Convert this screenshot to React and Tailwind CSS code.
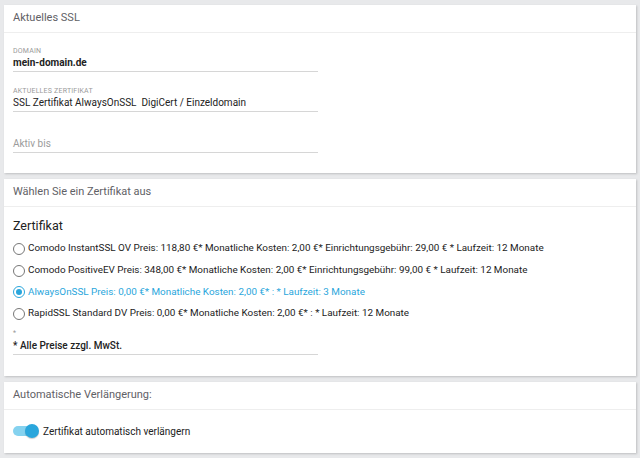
import { useState } from "react";

const options = [
  "Comodo InstantSSL OV Preis: 118,80 €* Monatliche Kosten: 2,00 €* Einrichtungsgebühr: 29,00 € * Laufzeit: 12 Monate",
  "Comodo PositiveEV Preis: 348,00 €* Monatliche Kosten: 2,00 €* Einrichtungsgebühr: 99,00 € * Laufzeit: 12 Monate",
  "AlwaysOnSSL Preis: 0,00 €* Monatliche Kosten: 2,00 €* : * Laufzeit: 3 Monate",
  "RapidSSL Standard DV Preis: 0,00 €* Monatliche Kosten: 2,00 €* : * Laufzeit: 12 Monate",
];

const Card = ({ title, children, className }) => (
  <div className={"bg-white mx-[4px] shadow-[1px_1px_2px_rgba(0,0,0,0.18)] " + className}>
    <div className="h-[28px] flex items-center px-[9px] border-b border-[#eeeeee] text-[11px] text-[#5f6166]">
      {title}
    </div>
    {children}
  </div>
);

const Field = ({ label, value, bold, placeholder }) => (
  <div className="w-[305px] border-b border-[#d6d6d6]">
    {label && (
      <div className="text-[7px] leading-[9px] tracking-[0.2px] text-[#9a9a9a] uppercase">{label}</div>
    )}
    <div
      className={
        "h-[15px] leading-[14px] text-[10px] whitespace-pre " +
        (placeholder ? "text-[#9b9b9b]" : bold ? "font-bold text-[#222]" : "text-[#222]")
      }
    >
      {value}
    </div>
  </div>
);

export default function App() {
  const [selected, setSelected] = useState(2);
  const [auto, setAuto] = useState(true);

  return (
    <div className="min-h-[458px] bg-[#e8e9eb] pt-[5px] pb-[4px] font-['Roboto',sans-serif] flex flex-col gap-[6px]">
      <Card title="Aktuelles SSL" className="h-[168px]">
        <div className="px-[9px] pt-[14px] flex flex-col">
          <Field label="Domain" value="mein-domain.de" bold />
          <div className="pt-[15px]">
            <Field label="Aktuelles Zertifikat" value="SSL Zertifikat AlwaysOnSSL  DigiCert / Einzeldomain" />
          </div>
          <div className="pt-[25px]">
            <Field value="Aktiv bis" placeholder />
          </div>
        </div>
      </Card>

      <Card title="Wählen Sie ein Zertifikat aus" className="h-[197px]">
        <div className="px-[9px] pt-[9px]">
          <div className="text-[12.5px] leading-[20px] text-[#222]">Zertifikat</div>
          <div className="flex flex-col mt-[2px]">
            {options.map((o, i) => {
              const on = selected === i;
              return (
                <label
                  key={i}
                  onClick={() => setSelected(i)}
                  className="h-[21.7px] flex items-center gap-[3px] cursor-pointer"
                >
                  <span
                    className={
                      "w-[12px] h-[12px] rounded-full border flex items-center justify-center shrink-0 " +
                      (on ? "border-[#2aa6dc]" : "border-[#777]")
                    }
                  >
                    {on && <span className="w-[6px] h-[6px] rounded-full bg-[#2aa6dc]" />}
                  </span>
                  <span className={"text-[9.9px] whitespace-nowrap " + (on ? "text-[#2aa6dc]" : "text-[#222]")}>{o}</span>
                </label>
              );
            })}
          </div>
          <div className="w-[305px] border-b border-[#d6d6d6] mt-[4px]">
            <div className="text-[7px] leading-[9px] text-[#9a9a9a]">*</div>
            <div className="h-[16px] leading-[16px] text-[10px] font-medium text-[#222]">* Alle Preise zzgl. MwSt.</div>
          </div>
        </div>
      </Card>

      <Card title="Automatische Verlängerung:" className="h-[71px]">
        <div className="px-[9px] h-[42px] flex items-center">
          <button onClick={() => setAuto(!auto)} className="relative w-[26px] h-[14px] mr-[4px]">
            <span className={"absolute left-0 top-[2px] w-[24px] h-[10px] rounded-full " + (auto ? "bg-[#85d2ef]" : "bg-[#bbb]")} />
            <span
              className={
                "absolute top-0 w-[14px] h-[14px] rounded-full shadow-[0_1px_1px_rgba(0,0,0,0.2)] " +
                (auto ? "left-[12px] bg-[#2aa6dc]" : "left-0 bg-[#f5f5f5]")
              }
            />
          </button>
          <span className="text-[10px] text-[#222]">Zertifikat automatisch verlängern</span>
        </div>
      </Card>
    </div>
  );
}
